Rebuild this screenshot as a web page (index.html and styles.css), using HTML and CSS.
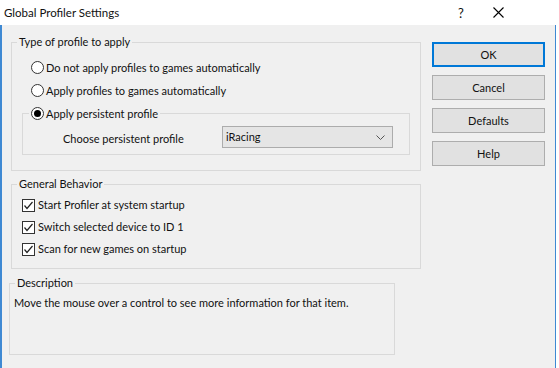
FILE: index.html
```html
<!DOCTYPE html>
<html>
<head>
    <title>Global Profiler Settings</title>
    <link rel="stylesheet" href="styles.css">
</head>
<body>
    <div class="window">
        <div class="titlebar">
            <span class="title">Global Profiler Settings</span>
            <span class="help-btn">?</span>
            <span class="close-btn">
                <svg width="11" height="11" viewBox="0 0 11 11"><path d="M0.5 0.5 L10.5 10.5 M10.5 0.5 L0.5 10.5" stroke="#000" stroke-width="1.1" fill="none"/></svg>
            </span>
        </div>
        <div class="client">
            <div class="main">
                <fieldset class="group group-type">
                    <legend>Type of profile to apply</legend>
                    <div class="option"><span class="radio"></span>Do not apply profiles to games automatically</div>
                    <div class="option"><span class="radio"></span>Apply profiles to games automatically</div>
                    <fieldset class="subgroup">
                        <legend class="option"><span class="radio checked"></span>Apply persistent profile</legend>
                        <div class="choose-row">
                            <span class="choose-label">Choose persistent profile</span>
                            <div class="select">
                                <span>iRacing</span>
                                <svg width="9" height="5" viewBox="0 0 9 5"><path d="M0.5 0.5 L4.5 4.5 L8.5 0.5" stroke="#555" fill="none"/></svg>
                            </div>
                        </div>
                    </fieldset>
                </fieldset>

                <fieldset class="group group-general">
                    <legend>General Behavior</legend>
                    <div class="check-row"><span class="checkbox"><svg width="11" height="11" viewBox="0 0 11 11"><path d="M1.5 5.5 L4 8.5 L9.5 2" stroke="#222" stroke-width="1.2" fill="none"/></svg></span>Start Profiler at system startup</div>
                    <div class="check-row"><span class="checkbox"><svg width="11" height="11" viewBox="0 0 11 11"><path d="M1.5 5.5 L4 8.5 L9.5 2" stroke="#222" stroke-width="1.2" fill="none"/></svg></span>Switch selected device to ID 1</div>
                    <div class="check-row"><span class="checkbox"><svg width="11" height="11" viewBox="0 0 11 11"><path d="M1.5 5.5 L4 8.5 L9.5 2" stroke="#222" stroke-width="1.2" fill="none"/></svg></span>Scan for new games on startup</div>
                </fieldset>

                <fieldset class="group group-desc">
                    <legend>Description</legend>
                    <div class="desc-text">Move the mouse over a control to see more information for that item.</div>
                </fieldset>
            </div>
            <div class="side">
                <button type="button" class="btn btn-default">OK</button>
                <button type="button" class="btn">Cancel</button>
                <button type="button" class="btn">Defaults</button>
                <button type="button" class="btn">Help</button>
            </div>
        </div>
    </div>
</body>
</html>
```

FILE: styles.css
```css
body {
    margin: 0;
    background: #ffffff;
    font-family: Lato, "Noto Sans", sans-serif;
    font-size: 11px;
    line-height: 14px;
    color: #111;
}
.window {
    width: 556px;
}
.titlebar {
    display: flex;
    align-items: center;
    height: 25px;
    background: #ffffff;
}
.title {
    flex: 1;
    padding-left: 4px;
    font-size: 11.5px;
}
.help-btn {
    width: 12px;
    font-size: 13px;
    margin-right: 23px;
}
.close-btn {
    display: flex;
    margin-right: 52px;
}
.client {
    display: flex;
    height: 343px;
    background: #f0f0f0;
    border-left: 2px solid #3f89d3;
    border-right: 1px solid #3f89d3;
    padding-left: 9px;
}
.main {
    width: 410px;
}
.group {
    margin: 0;
    padding: 0;
    border: 1px solid #d9d9d9;
    min-inline-size: 0;
}
.group legend {
    padding: 0 2px;
    margin-left: 5px;
    line-height: 14px;
}
.group-type {
    margin-top: 10px;
    padding-top: 7px;
}
.option {
    display: flex;
    align-items: center;
    height: 23px;
    padding-left: 19px;
}
.radio {
    width: 11px;
    height: 11px;
    border: 1px solid #333;
    border-radius: 50%;
    background: #fff;
    margin-right: 2px;
    position: relative;
}
.radio.checked::after {
    content: "";
    position: absolute;
    left: 2px;
    top: 2px;
    width: 7px;
    height: 7px;
    border-radius: 50%;
    background: #000;
}
.subgroup {
    margin: 0 10px 15px 10px;
    padding: 1px 0 6px 0;
    border: 1px solid #d9d9d9;
    min-inline-size: 0;
}
.subgroup legend.option {
    display: flex;
    height: 23px;
    padding: 0 2px;
    margin-left: 6px;
    line-height: 14px;
}
.choose-row {
    display: flex;
    align-items: center;
    padding-left: 40px;
}
.choose-label {
    width: 159px;
    padding-top: 4px;
}
.select {
    display: flex;
    align-items: center;
    justify-content: space-between;
    box-sizing: border-box;
    width: 171px;
    height: 22px;
    padding: 0 7px 0 3px;
    background: #e5e5e5;
    border: 1px solid #acacac;
}
.group-general {
    margin-top: 6px;
    padding: 3px 0 8px 10px;
}
.group-general legend {
    margin-left: -5px;
}
.check-row {
    display: flex;
    align-items: center;
    height: 22px;
}
.checkbox {
    display: flex;
    width: 11px;
    height: 11px;
    border: 1px solid #333;
    background: #fff;
    margin-right: 3px;
}
.group-desc {
    width: 386px;
    box-sizing: border-box;
    margin: 7px 0 0 -2px;
    padding: 5px 0 0 4px;
}
.group-desc legend {
    margin-left: 1px;
}
.desc-text {
    height: 59px;
    line-height: 16px;
}
.side {
    display: flex;
    flex-direction: column;
    gap: 8px;
    padding-top: 17px;
    margin-left: 11px;
}
.btn {
    width: 113px;
    height: 25px;
    background: #e1e1e1;
    border: 1px solid #adadad;
    font-family: Lato, "Noto Sans", sans-serif;
    font-size: 11px;
    color: #111;
    padding: 0;
}
.btn-default {
    border: 2px solid #0078d7;
}
```
